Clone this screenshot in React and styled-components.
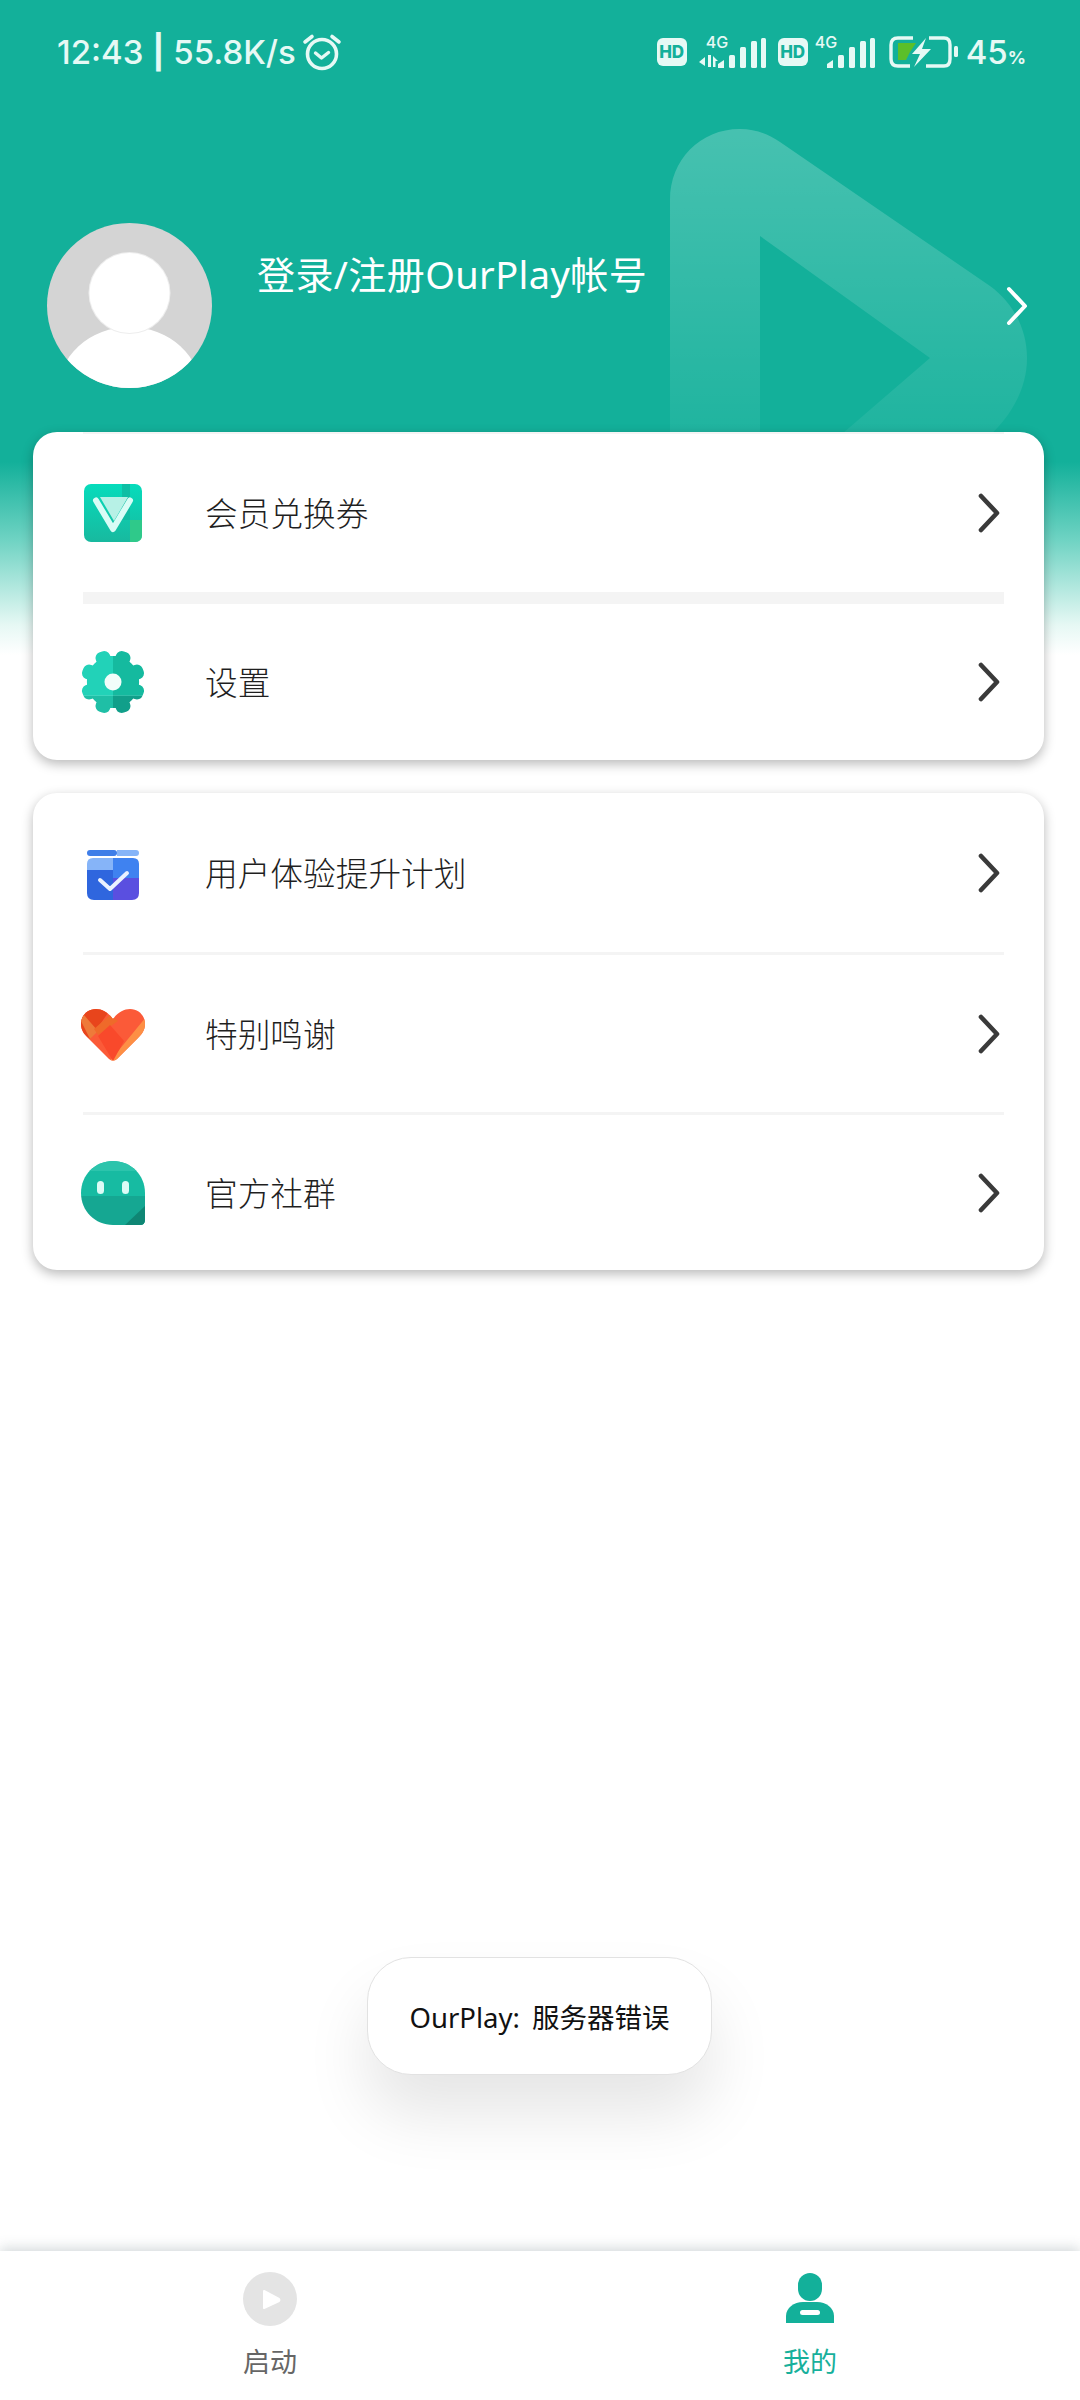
import React from "react";
import styled, { createGlobalStyle } from "styled-components";

const TEAL = "#13b09a";
const SANS = `"Noto Sans", "Noto Sans CJK SC", sans-serif`;

const Global = createGlobalStyle`
  html, body {
    margin: 0;
    padding: 0;
    background: #fff;
  }
  * {
    box-sizing: border-box;
  }
`;

const Page = styled.div`
  position: relative;
  width: 1080px;
  height: 2400px;
  overflow: hidden;
  display: flex;
  flex-direction: column;
  font-family: ${SANS};
  background: linear-gradient(#13b09a 0, #13b09a 462px, #6fd3c3 540px, #e6f8f4 625px, #fff 655px);
`;

const Watermark = styled.svg`
  position: absolute;
  left: 640px;
  top: 110px;
  width: 440px;
  height: 330px;
`;

const Hero = styled.header`
  position: relative;
  height: 432px;
  flex: none;
`;

const StatusBar = styled.div`
  height: 104px;
  padding: 30px 54px 0 57px;
  display: flex;
  align-items: flex-start;
  justify-content: space-between;
  color: #e6f9f5;
`;

const StatusLeft = styled.div`
  display: flex;
  align-items: center;
  gap: 6px;
  height: 44px;
`;

const Clock = styled.span`
  font-family: "Inter", sans-serif;
  font-size: 33px;
  font-weight: 500;
  letter-spacing: 0;
  white-space: nowrap;
  b {
    font-weight: 700;
  }
`;

const StatusRight = styled.div`
  display: flex;
  align-items: center;
  height: 44px;
`;

const HdBadge = styled.span`
  width: 30px;
  height: 28px;
  border-radius: 6px;
  background: #e6f9f5;
  color: ${TEAL};
  font-family: "Inter", sans-serif;
  font-size: 17px;
  font-weight: 800;
  display: flex;
  align-items: center;
  justify-content: center;
  margin-left: ${(p) => p.$gap || 0}px;
`;

const Signal = styled.div`
  position: relative;
  align-self: flex-start;
  width: ${(p) => p.$width}px;
  height: 38px;
  margin-left: ${(p) => p.$gap}px;
  svg {
    display: block;
  }
`;

const NetLabel = styled.span`
  position: absolute;
  left: ${(p) => p.$left}px;
  top: 4px;
  font-family: "Inter", sans-serif;
  font-size: 16px;
  font-weight: 500;
  line-height: 16px;
`;

const Percent = styled.span`
  margin-left: 8px;
  font-family: "Inter", sans-serif;
  font-size: 33px;
  font-weight: 500;
  small {
    font-size: 18px;
    font-weight: 700;
  }
`;

const Profile = styled.div`
  position: relative;
  height: 165px;
  margin-top: 119px;
  padding: 0 48px 0 47px;
  display: flex;
  align-items: center;
`;

const Avatar = styled.svg`
  width: 165px;
  height: 165px;
  flex: none;
`;

const LoginText = styled.div`
  align-self: flex-start;
  margin: 24px 0 0 45px;
  flex: 1;
  color: #fff;
  font-size: 38px;
  letter-spacing: 0.4px;
  line-height: 54px;
  white-space: nowrap;
`;

const CardList = styled.main`
  position: relative;
  padding: 0 36px 0 33px;
  display: flex;
  flex-direction: column;
  gap: 33px;
`;

const Card = styled.section`
  background: #fff;
  border-radius: 24px;
  padding: 0 40px 0 50px;
  box-shadow: 0 4px 12px rgba(0, 0, 0, 0.28);
`;

const Row = styled.div`
  height: ${(p) => p.$height}px;
  display: flex;
  align-items: center;
  border-top: ${(p) => p.$rule || 0}px solid #f4f4f4;
`;

const IconSlot = styled.div`
  width: 60px;
  height: 66px;
  flex: none;
  display: flex;
  align-items: center;
  justify-content: center;
  svg {
    display: block;
    flex: none;
    overflow: visible;
  }
`;

const Label = styled.span`
  margin-left: 62px;
  padding-bottom: 2px;
  flex: 1;
  color: #1f1f1f;
  font-size: 32.7px;
  font-weight: 300;
  white-space: nowrap;
`;

const Chevron = styled.svg`
  width: 24px;
  height: 40px;
  margin-right: 3px;
  flex: none;
`;

const Toast = styled.div`
  position: absolute;
  left: 367px;
  top: 1957px;
  width: 345px;
  height: 118px;
  display: flex;
  align-items: center;
  justify-content: center;
  background: #fff;
  border: 1.5px solid #e2e2e2;
  border-radius: 44px;
  color: #111;
  font-size: 27.5px;
  word-spacing: 5px;
  white-space: nowrap;
  box-shadow: 0 40px 64px rgba(0, 0, 0, 0.1);
`;

const TabBar = styled.nav`
  margin-top: auto;
  height: 149px;
  flex: none;
  display: grid;
  grid-template-columns: 1fr 1fr;
  background: #fff;
  box-shadow: 0 -3px 12px rgba(60, 80, 90, 0.22);
`;

const Tab = styled.div`
  padding-top: 21px;
  display: flex;
  flex-direction: column;
  align-items: center;
  color: ${(p) => (p.$active ? "#17b09b" : "#666")};
  font-size: 27px;
  line-height: 38px;
  svg {
    display: block;
    margin-bottom: 17px;
  }
`;

const ArrowIcon = ({ color = "#3a3a3a", width = 4.6 }) => (
  <Chevron viewBox="0 0 24 40">
    <path
      d="M4 3 L20 20 L4 37"
      fill="none"
      stroke={color}
      strokeWidth={width}
      strokeLinecap="round"
      strokeLinejoin="round"
    />
  </Chevron>
);

const AlarmIcon = () => (
  <svg width="40" height="38" viewBox="0 0 40 38" fill="none" stroke="#e6f9f5" strokeLinecap="round">
    <circle cx="20" cy="21" r="14.5" strokeWidth="3.6" />
    <path d="M13.5 20 L19.5 25 L26.5 19.5" strokeWidth="3.4" strokeLinejoin="round" />
    <path d="M3 9 L10 3.5 M37 9 L30 3.5" strokeWidth="3.6" />
  </svg>
);

const Bars = ({ x = 0 }) => (
  <g fill="#e6f9f5">
    <path d={`M${x} 34 L${x + 6} 30 V38 H${x} Z`} />
    <rect x={x + 11} y="25" width="6" height="13" rx="1.5" />
    <rect x={x + 22} y="17" width="6" height="21" rx="1.5" />
    <rect x={x + 33} y="11" width="6" height="27" rx="1.5" />
    <rect x={x + 43} y="8" width="5" height="30" rx="1.5" />
  </g>
);

const Battery = () => (
  <svg width="69" height="32" viewBox="0 0 69 32" style={{ marginLeft: 14 }}>
    <path
      d="M24 2 H9 Q2 2 2 9 V23 Q2 30 9 30 H21 M37 30 H55 Q61 30 61 23 V9 Q61 2 55 2 H40"
      fill="none"
      stroke="#e6f9f5"
      strokeWidth="3.4"
    />
    <path d="M9 7 H27 L21 16 L17 24 H9 Z" fill="#5bbf2a" />
    <path d="M37 2 L23 18 H31 L25 31 L42 13 H33 Z" fill="#e6f9f5" />
    <rect x="65" y="10" width="4" height="11" rx="1.5" fill="#e6f9f5" />
  </svg>
);

const VoucherIcon = () => (
  <svg width="58" height="58" viewBox="0 0 58 58">
    <defs>
      <linearGradient id="voucherBg" x1="0" y1="0" x2="0" y2="1">
        <stop offset="0" stopColor="#06dcbc" />
        <stop offset="1" stopColor="#18b99f" />
      </linearGradient>
    </defs>
    <rect width="58" height="58" rx="7" fill="url(#voucherBg)" />
    <path d="M38 0 H46 V36 H38 Z" fill="#10b69d" opacity="0.75" />
    <path d="M46 36 H58 V51 Q58 58 51 58 H46 Z" fill="#2fc98a" />
    <path d="M16 13 H44 L30 37 Z" fill="#b7f1e6" />
    <path d="M12 16.5 L29 45 L46 16.5" fill="none" stroke="#d9fcf6" strokeWidth="6" strokeLinecap="round" strokeLinejoin="round" />
  </svg>
);

const GearIcon = () => (
  <svg width="66" height="66" viewBox="0 0 62 62">
    <defs>
      <clipPath id="gearClip">
        <circle cx="31" cy="31" r="24.5" />
        {Array.from({ length: 8 }, (_, i) => (
          <rect
            key={i}
            x="24"
            y="0.5"
            width="14"
            height="16"
            rx="5.5"
            transform={`rotate(${i * 45 + 22.5} 31 31)`}
          />
        ))}
      </clipPath>
    </defs>
    <g clipPath="url(#gearClip)">
      <rect width="31" height="44" fill="#22d2b8" />
      <rect x="31" width="31" height="44" fill="#15ba9f" />
      <rect y="44" width="31" height="18" fill="#1fbfa6" />
      <rect x="31" y="44" width="31" height="18" fill="#119f8a" />
    </g>
    <circle cx="31" cy="31" r="8" fill="#f2fdfa" />
  </svg>
);

const PlanIcon = () => (
  <svg width="52" height="54" viewBox="0 -4 52 54">
    <rect x="0" y="0" width="30" height="6" rx="3" fill="#3f7ee8" />
    <path d="M30 0 H49 Q52 0 52 3 Q52 6 49 6 H30 Z" fill="#86b4f8" />
    <path d="M6 8 H26 V20 H0 V14 Q0 8 6 8 Z" fill="#86b4f8" />
    <path d="M26 8 H46 Q52 8 52 14 V28 H26 Z" fill="#3f82f0" />
    <path d="M0 20 H26 V50 H7 Q0 50 0 43 Z" fill="#2f66de" />
    <path d="M26 28 H52 V43 Q52 50 45 50 H26 Z" fill="#5a4fe0" />
    <path d="M13 30 L23 39 L40 23" fill="none" stroke="#eaf2ff" strokeWidth="4" strokeLinecap="round" strokeLinejoin="round" />
  </svg>
);

const HEART = "M33 12 C28 5 22 2 16 2 C7 2 1 9 1 17 C1 23 4 27 8 31 L29 52 Q33 55 37 52 L58 31 C62 27 65 23 65 17 C65 9 59 2 50 2 C44 2 38 5 33 12 Z";

const HeartIcon = () => (
  <svg width="66" height="54" viewBox="0 0 66 54">
    <defs>
      <clipPath id="heartClip">
        <path d={HEART} />
      </clipPath>
    </defs>
    <g clipPath="url(#heartClip)">
      <rect width="66" height="54" fill="#fb5a38" />
      <path d="M0 0 H32 L10 32 L0 24 Z" fill="#e8451c" />
      <path d="M0 12 L10 32 L18 24 L4 8 Z" fill="#ee7a3a" />
      <path d="M30 8 L38 14 L18 28 L14 22 Z" fill="#ef6a2a" />
      <path d="M66 10 V24 L36 54 H30 Z" fill="#fd8f45" />
      <path d="M18 29 L30 18 L44 34 L33 54 Z" fill="#f9492b" />
    </g>
  </svg>
);

const BubbleIcon = () => (
  <svg width="65" height="64" viewBox="0 0 65 64">
    <defs>
      <clipPath id="bubbleClip">
        <path d="M32 0 C50 0 64 14 64 32 V59 Q64 64 59 64 H32 C14 64 0 50 0 32 C0 14 14 0 32 0 Z" />
      </clipPath>
    </defs>
    <g clipPath="url(#bubbleClip)">
      <rect width="65" height="35" fill="#17bba2" />
      <rect y="0" width="65" height="10" fill="#2cc4ac" />
      <rect y="35" width="65" height="29" fill="#15a792" />
      <path d="M44 64 L65 44 V64 Z" fill="#0f8674" />
    </g>
    <rect x="16" y="20" width="7" height="13" rx="3.5" fill="#dcfbf6" />
    <rect x="41" y="20" width="7" height="13" rx="3.5" fill="#dcfbf6" />
  </svg>
);

const App = () => {
  return (
    <Page>
      <Global />
      <Watermark viewBox="640 110 440 330">
        <defs>
          <linearGradient id="markFade" x1="0" y1="0" x2="0" y2="1">
            <stop offset="0" stopColor="#fff" stopOpacity="0.22" />
            <stop offset="1" stopColor="#fff" stopOpacity="0.05" />
          </linearGradient>
        </defs>
        <path
          fillRule="evenodd"
          fill="url(#markFade)"
          d="M670 440 V200 C670 160 700 129 740 129 C755 129 768 134 780 142 L990 286 C1012 302 1027 328 1027 358 C1027 390 1010 418 985 440 H835 L930 358 L760 236 V440 Z"
        />
      </Watermark>
      <Hero>
        <StatusBar>
          <StatusLeft>
            <Clock>
              12:43 <b>|</b> 55.8K/s
            </Clock>
            <AlarmIcon />
          </StatusLeft>
          <StatusRight>
            <HdBadge>HD</HdBadge>
            <Signal $width={67} $gap={12}>
              <NetLabel $left={7}>4G</NetLabel>
              <svg width="67" height="38">
                <path d="M0 32 L6 27 V36 Z M9 25 V37 H12 V25 Z M14 37 V26 L19 31 H16.5 V37 Z" fill="#e6f9f5" />
                <Bars x={19} />
              </svg>
            </Signal>
            <HdBadge $gap={12}>HD</HdBadge>
            <Signal $width={60} $gap={7}>
              <NetLabel $left={0}>4G</NetLabel>
              <svg width="60" height="38">
                <Bars x={12} />
              </svg>
            </Signal>
            <Battery />
            <Percent>
              45<small>%</small>
            </Percent>
          </StatusRight>
        </StatusBar>
        <Profile>
          <Avatar viewBox="0 0 165 165">
            <defs>
              <clipPath id="avatarClip">
                <circle cx="82.5" cy="82.5" r="82.5" />
              </clipPath>
            </defs>
            <g clipPath="url(#avatarClip)">
              <rect width="165" height="165" fill="#d4d4d4" />
              <ellipse cx="82.5" cy="170" rx="72" ry="66" fill="#fff" />
              <circle cx="82.5" cy="70" r="41" fill="#eee" />
              <circle cx="82.5" cy="70" r="40" fill="#fff" />
            </g>
          </Avatar>
          <LoginText>登录/注册OurPlay帐号</LoginText>
          <ArrowIcon color="#fff" width={4} />
        </Profile>
      </Hero>
      <CardList>
        <Card>
          <Row $height={160} $rule={2}>
            <IconSlot>
              <VoucherIcon />
            </IconSlot>
            <Label>会员兑换券</Label>
            <ArrowIcon />
          </Row>
          <Row $height={168} $rule={12}>
            <IconSlot>
              <GearIcon />
            </IconSlot>
            <Label>设置</Label>
            <ArrowIcon />
          </Row>
        </Card>
        <Card>
          <Row $height={159}>
            <IconSlot>
              <PlanIcon />
            </IconSlot>
            <Label>用户体验提升计划</Label>
            <ArrowIcon />
          </Row>
          <Row $height={160} $rule={3}>
            <IconSlot>
              <HeartIcon />
            </IconSlot>
            <Label>特别鸣谢</Label>
            <ArrowIcon />
          </Row>
          <Row $height={158} $rule={3}>
            <IconSlot>
              <BubbleIcon />
            </IconSlot>
            <Label>官方社群</Label>
            <ArrowIcon />
          </Row>
        </Card>
      </CardList>
      <TabBar>
        <Tab>
          <svg width="54" height="54" viewBox="0 0 54 54">
            <circle cx="27" cy="27" r="27" fill="#e4e4e4" />
            <path d="M21 19 L36 27 Q37 28 36 29 L21 36 Z" fill="#fff" stroke="#fff" strokeWidth="2" strokeLinejoin="round" />
          </svg>
          启动
        </Tab>
        <Tab $active>
          <svg width="48" height="54" viewBox="0 0 48 54">
            <rect x="12" y="1" width="24" height="28" rx="12" fill="#13b09a" />
            <path d="M0 51 V44 C0 36 8 30 17 30 H31 C40 30 48 36 48 44 V51 Z" fill="#13b09a" />
            <rect x="14" y="38" width="20" height="5" rx="2.5" fill="#fff" />
          </svg>
          我的
        </Tab>
      </TabBar>
      <Toast>OurPlay: 服务器错误</Toast>
    </Page>
  );
};

export default App;
